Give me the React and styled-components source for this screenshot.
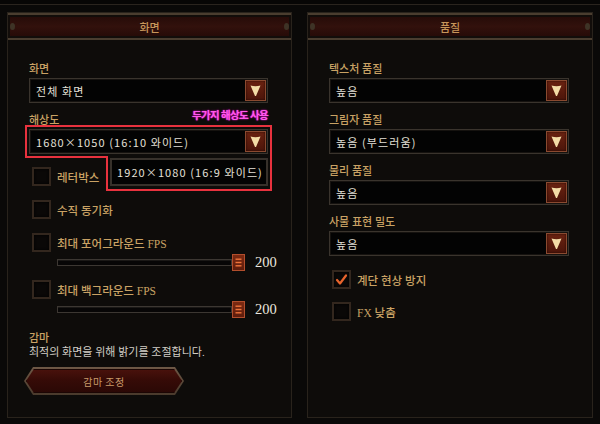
import React from "react";
import styled, { createGlobalStyle } from "styled-components";

const SERIF = `"Liberation Serif", "Noto Sans CJK KR", serif`;
const SANS = `"Noto Sans CJK KR", "Noto Sans", sans-serif`;

const GlobalStyle = createGlobalStyle`
  html, body { margin: 0; padding: 0; background: #0a0908; }
  body { width: 600px; height: 424px; overflow: hidden; font-family: ${SERIF}; }
  * { box-sizing: border-box; }
`;

const Screen = styled.div`
  width: 600px;
  height: 424px;
  background: #0a0908;
  display: flex;
  flex-direction: column;
`;

const TopFrame = styled.div`
  height: 5px;
  background: #070605;
  border-bottom: 1px solid #2a241e;
`;

const Columns = styled.div`
  display: grid;
  grid-template-columns: 285px 286px;
  column-gap: 15px;
  padding: 7px 7px 0;
`;

const Panel = styled.section`
  height: 406px;
  border: 1px solid #29231c;
  background: #0e0c0a;
  display: flex;
  flex-direction: column;
`;

const Header = styled.div`
  position: relative;
  height: 27px;
  border-top: 2px solid #4a3d2f;
  border-bottom: 2px solid #4a3d2f;
  background: linear-gradient(180deg, #240b08 0%, #32110c 50%, #240a07 100%);
  box-shadow: inset 0 0 0 2px #120d0a;
  display: flex;
  align-items: center;
  justify-content: center;
  color: #c8965a;
  font-family: ${SANS};
  font-size: 11px;
  font-weight: 500;
  &::before,
  &::after {
    content: "";
    position: absolute;
    top: 8px;
    width: 5px;
    height: 7px;
    border-radius: 50%;
    background: #3e3326;
  }
  &::before { left: 2px; }
  &::after { right: 2px; }
`;

const Body = styled.div`
  padding: 22px 23px 0 21px;
  display: flex;
  flex-direction: column;
`;

const FieldStack = styled.div`
  display: flex;
  flex-direction: column;
  gap: 10px;
`;

const Field = styled.div`
  position: relative;
  display: flex;
  flex-direction: column;
`;

const Label = styled.div`
  height: 14px;
  line-height: 14px;
  font-size: 11px;
  color: #c9a264;
  font-weight: 500;
  white-space: nowrap;
`;

const Select = styled.div`
  margin-top: 2px;
  height: 25px;
  border: 1px solid #3a342d;
  box-shadow: inset 0 0 0 1px #15120f;
  background: #030303;
  display: flex;
  align-items: center;
  padding: 0 1px 0 6px;
`;

const SelectValue = styled.span`
  flex: 1;
  font-family: ${SANS};
  font-size: 11px;
  letter-spacing: 1.1px;
  color: #e4e0d8;
  white-space: nowrap;
`;

const ArrowBox = styled.span`
  width: 21px;
  height: 21px;
  border: 1px solid #8a4a30;
  background: linear-gradient(180deg, #6a2210, #4c150a);
  box-shadow: inset 0 0 2px #1c0603;
  display: flex;
  align-items: center;
  justify-content: center;
`;

const Arrow = () => (
  <ArrowBox>
    <svg width="13" height="13" viewBox="0 0 13 13">
      <path d="M1.5 1.5 Q6.5 3 11.5 1.5 L7 12 L6 12 Z" fill="#f3dca6" />
    </svg>
  </ArrowBox>
);

const Dropdown = ({ value }) => (
  <Select>
    <SelectValue>{value}</SelectValue>
    <Arrow />
  </Select>
);

const Popup = styled.div`
  position: absolute;
  left: 81px;
  top: 45px;
  width: 158px;
  height: 28px;
  border: 2px solid #37312b;
  background: #030303;
  display: flex;
  align-items: center;
  padding-left: 5px;
`;

const Annotation = styled.svg`
  position: absolute;
  left: -4px;
  top: 12px;
  overflow: visible;
`;

const Note = styled.div`
  position: absolute;
  right: 0;
  top: -4px;
  font-family: ${SANS};
  font-size: 10.5px;
  font-weight: 700;
  letter-spacing: -0.6px;
  line-height: 12px;
  color: #ff5aec;
  text-shadow: 0 0 1px #d411b8, 0 0 2px #c010a8;
  white-space: nowrap;
`;

const CheckList = styled.div`
  margin-top: ${(p) => p.$mt}px;
  display: flex;
  flex-direction: column;
`;

const CheckItem = styled.div`
  margin-top: ${(p) => p.$mt || 0}px;
  display: flex;
  flex-direction: column;
`;

const CheckRow = styled.div`
  height: 19px;
  display: flex;
  align-items: center;
  gap: 6px;
`;

const Box = styled.span`
  margin-left: 3px;
  width: 19px;
  height: 19px;
  border: 2px solid #33271e;
  background: #0a0807;
  box-shadow: inset 0 0 3px #000;
  display: flex;
  align-items: center;
  justify-content: center;
`;

const Check = ({ checked }) => (
  <Box>
    {checked && (
      <svg width="13" height="13" viewBox="0 0 13 13">
        <path d="M2 7 L5 10.5 L11 2.5" fill="none" stroke="#e8642c" strokeWidth="2.2" strokeLinecap="round" strokeLinejoin="round" />
      </svg>
    )}
  </Box>
);

const SliderRow = styled.div`
  margin-top: 2px;
  height: 16px;
  padding-left: 28px;
  display: flex;
  align-items: center;
  width: max-content;
`;

const Track = styled.div`
  flex: none;
  width: 175px;
  height: 7px;
  border: 1px solid #3c3732;
  background: #070606;
  box-shadow: inset 0 1px 0 #1a1816;
`;

const Thumb = styled.div`
  flex: none;
  width: 13px;
  height: 17px;
  border: 1px solid #b24e2c;
  background: linear-gradient(180deg, #7c2a12, #5e1c0c);
  display: flex;
  align-items: center;
  justify-content: center;
`;

const Value = styled.span`
  margin-left: 10px;
  font-family: "Liberation Serif", serif;
  font-size: 14.5px;
  color: #ebe7df;
`;

const Slider = ({ value }) => (
  <SliderRow>
    <Track />
    <Thumb>
      <svg width="7" height="9" viewBox="0 0 7 9">
        <rect x="0.5" y="0.5" width="6" height="1.4" fill="#f0743a" />
        <rect x="0.5" y="3.8" width="6" height="1.4" fill="#f0743a" />
        <rect x="0.5" y="7.1" width="6" height="1.4" fill="#f0743a" />
      </svg>
    </Thumb>
    <Value>{value}</Value>
  </SliderRow>
);

const CheckText = styled.span`
  font-size: 11.5px;
  color: #c9a264;
  font-weight: 500;
  white-space: nowrap;
`;

const CheckOption = ({ label, checked, mt, slider }) => (
  <CheckItem $mt={mt}>
    <CheckRow>
      <Check checked={checked} />
      <CheckText>{label}</CheckText>
    </CheckRow>
    {slider && <Slider value={slider} />}
  </CheckItem>
);

const Gamma = styled.div`
  margin-top: 14px;
  display: flex;
  flex-direction: column;
`;

const Description = styled.div`
  height: 15px;
  line-height: 15px;
  font-size: 11px;
  color: #d2cec6;
  white-space: nowrap;
`;

const GammaButton = styled.button`
  margin-top: 7px;
  margin-left: -5px;
  width: 160px;
  height: 28px;
  border: 0;
  padding: 2px;
  background: linear-gradient(180deg, #6e5846, #4a3a2c);
  clip-path: polygon(9px 0, calc(100% - 9px) 0, 100% 50%, calc(100% - 9px) 100%, 9px 100%, 0 50%);
  display: flex;
  cursor: pointer;
`;

const GammaInner = styled.span`
  flex: 1;
  clip-path: polygon(8px 0, calc(100% - 8px) 0, 100% 50%, calc(100% - 8px) 100%, 8px 100%, 0 50%);
  background: linear-gradient(180deg, #4a120c 0%, #360b07 45%, #2a0805 100%);
  box-shadow: inset 0 0 0 1px #1c0604;
  display: flex;
  align-items: center;
  justify-content: center;
  font-family: ${SANS};
  font-size: 10px;
  color: #c99a6a;
  letter-spacing: 0.5px;
`;

export default function App() {
  return (
    <Screen>
      <GlobalStyle />
      <TopFrame />
      <Columns>
        <Panel>
          <Header>화면</Header>
          <Body>
            <FieldStack>
              <Field>
                <Label>화면</Label>
                <Dropdown value="전체 화면" />
              </Field>
              <Field>
                <Label>해상도</Label>
                <Dropdown value="1680×1050 (16:10 와이드)" />
                <Popup>
                  <SelectValue>1920×1080 (16:9 와이드)</SelectValue>
                </Popup>
                <Annotation width="248" height="67" viewBox="0 0 248 67">
                  <polygon points="1,1 246,1 246,65 82,65 82,32 1,32" fill="none" stroke="#e8323e" strokeWidth="2" />
                </Annotation>
                <Note>두가지 해상도 사용</Note>
              </Field>
            </FieldStack>
            <CheckList $mt={13}>
              <CheckOption label="레터박스" />
              <CheckOption label="수직 동기화" mt={14} />
              <CheckOption label="최대 포어그라운드 FPS" mt={14} slider="200" />
              <CheckOption label="최대 백그라운드 FPS" mt={10} slider="200" />
            </CheckList>
            <Gamma>
              <Label>감마</Label>
              <Description>최적의 화면을 위해 밝기를 조절합니다.</Description>
              <GammaButton>
                <GammaInner>감마 조정</GammaInner>
              </GammaButton>
            </Gamma>
          </Body>
        </Panel>
        <Panel>
          <Header>품질</Header>
          <Body>
            <FieldStack>
              <Field>
                <Label>텍스처 품질</Label>
                <Dropdown value="높음" />
              </Field>
              <Field>
                <Label>그림자 품질</Label>
                <Dropdown value="높음 (부드러움)" />
              </Field>
              <Field>
                <Label>물리 품질</Label>
                <Dropdown value="높음" />
              </Field>
              <Field>
                <Label>사물 표현 밀도</Label>
                <Dropdown value="높음" />
              </Field>
            </FieldStack>
            <CheckList $mt={14}>
              <CheckOption label="계단 현상 방지" checked />
              <CheckOption label="FX 낮춤" mt={13} />
            </CheckList>
          </Body>
        </Panel>
      </Columns>
    </Screen>
  );
}
